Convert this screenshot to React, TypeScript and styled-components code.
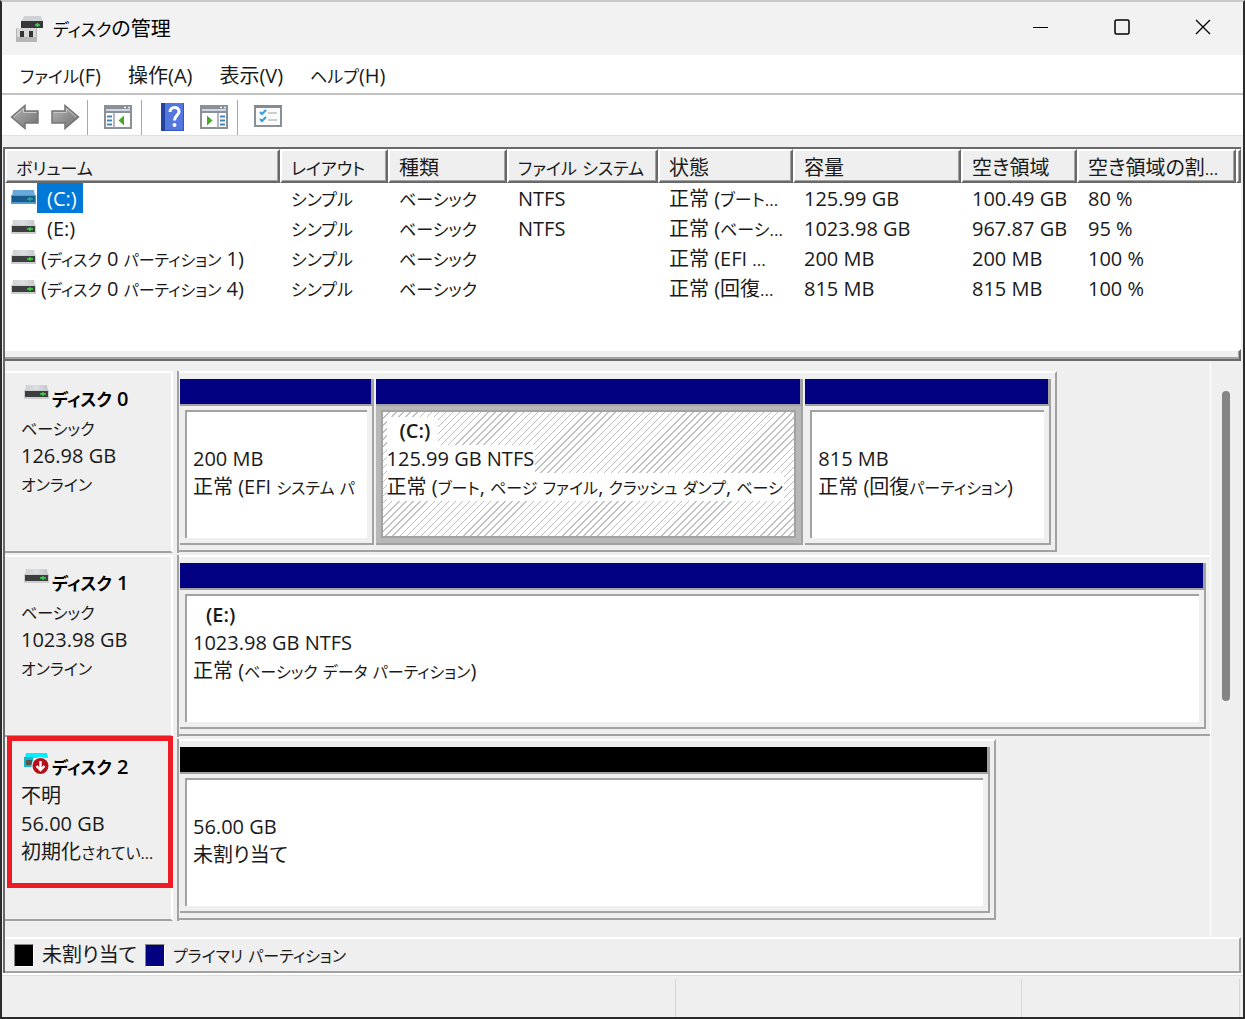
import React from "react";
import styled, { createGlobalStyle, css } from "styled-components";

const GlobalStyle = createGlobalStyle`
  *, *::before, *::after { box-sizing: border-box; }
  html, body { margin: 0; padding: 0; }
  body {
    background: #262626;
    color: #1a1a1a;
    font-family: "Open Sans", "Noto Sans CJK JP", sans-serif;
    font-size: 20px;
    line-height: 28px;
    font-feature-settings: "palt" 1;
  }
  button { font: inherit; font-feature-settings: inherit; color: inherit; border: 0; background: none; padding: 0; }
  svg { flex: none; }
`;

const face = "#efefef";
const shade = "#a2a2a2";
const dark = "#696969";
const navy = "#000080";

const Window = styled.div`
  display: flex;
  flex-direction: column;
  min-height: 100vh;
  border: 2px solid #2b2b2b;
  border-top-color: #c8c8c8;
  background: ${face};
`;

const Kana = styled.span<{ $compact?: boolean }>`
  font-size: ${(p) => (p.$compact ? 16 : 17)}px;
  line-height: 20px;
`;

const TitleBar = styled.header`
  display: flex;
  align-items: center;
  height: 53px;
  padding-left: 14px;
  background: #f2f2f2;
  color: #000;
`;

const Title = styled.h1`
  flex: 1;
  margin: 0 0 0 9px;
  font-size: 20px;
  font-weight: 400;
`;

const CaptionButton = styled.button`
  display: grid;
  place-items: center;
  align-self: flex-start;
  width: 81px;
  height: 50px;
`;

const MenuBar = styled.nav`
  display: flex;
  gap: 27px;
  height: 40px;
  padding: 3px 18px 0;
  background: #fff;
  border-bottom: 2px solid #c2c2c2;
`;

const Toolbar = styled.div`
  display: flex;
  align-items: center;
  height: 41px;
  padding: 4px 0 0 3px;
  background: #fff;
  border-bottom: 1px solid #e0e0e0;
`;

const ToolButton = styled.button<{ $wide?: boolean }>`
  display: grid;
  place-items: center;
  width: ${(p) => (p.$wide ? 42 : 40)}px;
  height: 36px;
  flex: none;
`;

const ToolSeparator = styled.span`
  width: 1px;
  height: 35px;
  margin: 0 9px 0 2px;
  background: #a8a8a8;
`;

const Client = styled.main`
  display: flex;
  flex-direction: column;
  flex: 1;
  margin: 11px 2px 0 1px;
  border: solid ${dark};
  border-width: 2px 0 0 2px;
  outline: 1px solid ${face};
`;

const VolumeList = styled.section`
  height: 200px;
  background: #fff;
  overflow: hidden;
`;

const VolumeTable = styled.table`
  width: 100%;
  table-layout: fixed;
  border-collapse: separate;
  border-spacing: 0;
  white-space: nowrap;
`;

const HeadCell = styled.th`
  height: 34px;
  padding: 3px 0 0 9px;
  overflow: hidden;
  font-weight: 400;
  line-height: 26px;
  text-align: left;
  background: ${face};
  border: 2px solid ${dark};
  border-top-color: #fff;
  border-left-color: #fff;
  box-shadow: inset -1px -1px 0 ${shade};
`;

const Cell = styled.td`
  height: 30px;
  padding: 2px 0 0 11px;
  overflow: hidden;
`;

const NameCell = styled(Cell)`
  padding: 0 0 0 6px;
`;

const NameLine = styled.div`
  display: flex;
  align-items: center;
  height: 30px;
`;

const VolumeName = styled.span<{ $selected?: boolean; $letter?: boolean }>`
  height: 30px;
  margin-left: 1px;
  padding: 2px 6px 0 ${(p) => (p.$letter ? 10 : 4)}px;
  ${(p) =>
    p.$selected &&
    css`
      color: #fff;
      background: #0078d7;
    `}
`;

const Splitter = styled.div`
  height: 12px;
  border: solid ${dark};
  border-width: 0 2px 2px 0;
  border-top: 2px solid #fff;
  box-shadow: inset -1px -2px 0 ${shade};
`;

const DiskPane = styled.section`
  display: flex;
  flex: 1;
`;

const DiskList = styled.div`
  display: flex;
  flex: 1;
  flex-direction: column;
  gap: 2px;
  min-width: 0;
  padding: 10px 0 15px;
`;

const ScrollTrack = styled.div`
  width: 31px;
  padding: 30px 0 0 11px;
  border-left: 1px solid #fff;
`;

const ScrollThumb = styled.div`
  width: 8px;
  height: 310px;
  border-radius: 4px;
  background: #858585;
`;

const DiskRow = styled.article`
  display: flex;
  height: 182px;
`;

const DiskLabel = styled.div`
  position: relative;
  width: 168px;
  padding: 11px 4px 0 16px;
  white-space: nowrap;
  border: solid #fff;
  border-width: 2px 2px 0 0;
  border-bottom: 2px solid ${shade};
`;

const DiskTitle = styled.h2`
  display: flex;
  gap: 3px;
  margin: 0;
  padding: 0 0 0 3px;
  font-size: 20px;
  font-weight: 600;
  line-height: 30px;
  color: #000;
`;

const DiskLine = styled.div`
  height: 28px;
`;

const Highlight = styled.div`
  position: absolute;
  inset: -5px -2px 31px 2px;
  border: 5px solid #ed1c24;
`;

const Track = styled.div`
  flex: 1;
  min-width: 0;
  margin-left: 4px;
  border-left: 2px solid ${shade};
`;

const DiskFrame = styled.div<{ $full?: boolean }>`
  display: flex;
  gap: 2px;
  height: 181px;
  padding: 6px 4px 5px 1px;
  border: 2px solid ${shade};
  border-top-color: #fff;
  border-left: 0;
  border-right-width: ${(p) => (p.$full ? 0 : 2)}px;
`;

const Partition = styled.div`
  display: flex;
  flex-direction: column;
  flex-basis: 0;
  min-width: 0;
  border: solid ${shade};
  border-width: 0 2px 2px 0;
`;

const Stripe = styled.div<{ $free?: boolean }>`
  height: 27px;
  border: solid ${shade};
  border-width: 0 1px 2px 0;
  background: ${(p) => (p.$free ? "#000" : navy)};
`;

const PartitionBody = styled.div<{ $selected?: boolean }>`
  flex: 1;
  min-height: 0;
  padding: 4px 5px 5px;
  background: ${(p) => (p.$selected ? "#b8b8b8" : face)};
`;

const PartitionInner = styled.div<{ $selected?: boolean }>`
  height: 100%;
  padding: 5px ${(p) => (p.$selected ? 4 : 6)}px;
  overflow: hidden;
  white-space: nowrap;
  border: solid ${shade};
  border-width: ${(p) => (p.$selected ? "2px" : "2px 0 0 2px")};
  background: ${(p) =>
    p.$selected
      ? "repeating-linear-gradient(135deg, #fff 0, #fff 4px, #c0c0c0 4px, #c0c0c0 5px)"
      : "#fff"};
`;

const PartitionLine = styled.div<{ $strong?: boolean }>`
  height: 28px;
  font-weight: ${(p) => (p.$strong ? 600 : 400)};
`;

const PartitionText = styled.span<{ $indent?: boolean }>`
  display: inline-block;
  height: 28px;
  padding: 0 ${(p) => (p.$indent ? "8px 0 13px" : "1px 0 0")};
  background: #fff;
`;

const Legend = styled.footer`
  display: flex;
  align-items: center;
  gap: 8px;
  height: 36px;
  padding-left: 9px;
  border: solid #fff;
  border-width: 2px 2px 2px 0;
  border-right-color: ${shade};
  border-bottom-color: ${shade};
`;

const Swatch = styled.span<{ $color: string }>`
  width: 20px;
  height: 23px;
  border: 1px solid #888;
  border-right-color: #fff;
  border-bottom-color: #fff;
  background: ${(p) => p.$color};
`;

const StatusBar = styled.div`
  display: flex;
  height: 44px;
  padding: 4px 3px 0 0;
  border-top: 2px solid #fff;
  box-shadow: inset 0 1px 0 #dcdcdc;
`;

const StatusPart = styled.div<{ $grow: number }>`
  flex: ${(p) => p.$grow} 0 0;
  border-right: 1px solid #d6d6d6;
`;

// Kana runs are set a step smaller than kanji and Latin, as in a UI face with narrow kana.
const kanaRun = /([\u30a0-\u30ff]+|\.{3})/;
const compactRun = /([\u3040-\u30ff]+\.{3}|[\u3040-\u30ff]+|\.{3})/;

function Label({ children, compact }: { children: string; compact?: boolean }) {
  const runs = children.split(compact ? compactRun : kanaRun);
  return (
    <span>
      {runs.map((run, i) => (i % 2 ? <Kana key={i} $compact={compact}>{run}</Kana> : run))}
    </span>
  );
}

function DriveIcon({ selected }: { selected?: boolean }) {
  return (
    <svg width="25" height="18" viewBox="0 0 25 18" aria-hidden="true">
      <defs>
        <linearGradient id="driveLid" x1="0" x2="1" y1="0" y2="0">
          <stop offset="0" stopColor="#cfd2d5" />
          <stop offset="0.5" stopColor="#dcdee0" />
          <stop offset="1" stopColor="#c4c7ca" />
        </linearGradient>
      </defs>
      <path d="M2 1h21l1 6H1z" fill={selected ? "#68a9dc" : "url(#driveLid)"} />
      <path d="M0 6h25v9H0z" fill={selected ? "#4f9ad5" : "#cbcdcf"} />
      <path d="M1 7h23v6H1z" fill={selected ? "#195a8c" : "#3c3e3f"} />
      <path d="M16 10h6M19 8v4" stroke={selected ? "#25b08b" : "#38df3c"} strokeWidth="1.3" />
    </svg>
  );
}

function UnknownDiskIcon() {
  return (
    <svg width="25" height="24" viewBox="0 0 25 24" aria-hidden="true">
      <path d="M2 1h21l1 5H1z" fill="#00f0ff" />
      <path d="M0 5h9v10H0z" fill="#16b6c2" />
      <path d="M2 8h6v5H2z" fill="#555" />
      <circle cx="16.500" cy="14" r="9" fill="#fff" />
      <circle cx="16.500" cy="14" r="8" fill="#b3121c" />
      <path d="M16.500 9v8M12.500 14l4 4 4-4" fill="none" stroke="#fff" strokeWidth="2.4" />
    </svg>
  );
}

function AppIcon() {
  return (
    <svg width="28" height="28" viewBox="0 0 28 28" aria-hidden="true">
      <path d="M8 1h17l2 6H5z" fill="#d0d3d5" />
      <path d="M5 6h22v7H5z" fill="#35383a" />
      <path d="M19 10h5M21.500 8v4" stroke="#36df3c" strokeWidth="1.500" />
      <path d="M0 13h21v14H0z" fill="#b5b5b5" />
      <path d="M1 13h19v9H1z" fill="#d8d8d8" />
      <path d="M4 16h4v6H4zM13 16h4v6h-4z" fill="#343434" />
    </svg>
  );
}

function ArrowIcon({ right }: { right?: boolean }) {
  return (
    <svg width="30" height="26" viewBox="0 0 30 26" aria-hidden="true">
      <defs>
        <linearGradient id="arrowFill" x1="0" x2="1" y1="0" y2="1">
          <stop offset="0" stopColor="#b5b5b5" />
          <stop offset="1" stopColor="#6f6f6f" />
        </linearGradient>
      </defs>
      <path
        d={right ? "M2 7h13V1.500L28.500 13 15 24.500V19H2z" : "M28 7H15V1.500L1.500 13 15 24.500V19h13z"}
        fill="url(#arrowFill)"
        stroke="#767676"
        strokeWidth="1.500"
      />
      <path
        d={right ? "M3.500 8.500h13V4.500l9.500 8.500" : "M26.500 8.500h-13V4.500L4 13"}
        fill="none"
        stroke="#c9c9c9"
        strokeWidth="1"
      />
    </svg>
  );
}

function PaneIcon({ right }: { right?: boolean }) {
  const list = right ? 20 : 3;
  return (
    <svg width="28" height="24" viewBox="0 0 28 24" aria-hidden="true">
      <path d="M1 1h26v22H1z" fill="#fff" stroke="#8b9096" strokeWidth="2" />
      <path d="M1 1h26v7H1z" fill="#8b919a" />
      <path d="M2 5h24" stroke="#d4d9e1" strokeWidth="2" />
      <path d="M20 2.500h2M24 2.500h2" stroke="#e8ecf2" strokeWidth="1.500" />
      <path d={right ? "M18 8v15" : "M10 8v15"} stroke="#9ba0a7" strokeWidth="1.500" />
      <path d={`M${list} 11.500h5M${list} 15.500h5M${list} 19.500h5`} stroke="#4484bd" strokeWidth="1.800" />
      <path d={right ? "M7 10.500v10l5.500-5z" : "M20 10.500v10l-5.500-5z"} fill="#44ad24" />
    </svg>
  );
}

function HelpIcon() {
  return (
    <svg width="23" height="28" viewBox="0 0 23 28" aria-hidden="true">
      <path d="M0 0h23v28H0z" fill="#3156c0" />
      <path d="M4 0h18v27H4z" fill="#5377dc" />
      <path d="M0 0h4v28H0z" fill="#2442a0" />
      <path d="M9 9c0-6 9-6 9-.500 0 4-4.500 4-4.500 9" fill="none" stroke="#fff" strokeWidth="3" />
      <circle cx="13.500" cy="22" r="2" fill="#fff" />
    </svg>
  );
}

function ChecklistIcon() {
  return (
    <svg width="28" height="24" viewBox="0 0 28 24" aria-hidden="true">
      <path d="M1 1h26v20H1z" fill="#fbfbfb" stroke="#8b9096" strokeWidth="2" />
      <path d="M0 0h28v3H0z" fill="#858b92" />
      <path d="M6 7l2 2 4-4M6 14l2 2 4-4" fill="none" stroke="#319ce0" strokeWidth="2" />
      <path d="M14 8h9M14 15h9" stroke="#c0c0c0" strokeWidth="1.500" />
    </svg>
  );
}

const columns = [
  { title: "ボリューム", width: 275 },
  { title: "レイアウト", width: 108 },
  { title: "種類", width: 119 },
  { title: "ファイル システム", width: 151 },
  { title: "状態", width: 135 },
  { title: "容量", width: 168 },
  { title: "空き領域", width: 116 },
  { title: "空き領域の割...", width: 159 },
];

const volumes = [
  ["(C:)", "シンプル", "ベーシック", "NTFS", "正常 (ブート...", "125.99 GB", "100.49 GB", "80 %"],
  ["(E:)", "シンプル", "ベーシック", "NTFS", "正常 (ベーシ...", "1023.98 GB", "967.87 GB", "95 %"],
  ["(ディスク 0 パーティション 1)", "シンプル", "ベーシック", "", "正常 (EFI ...", "200 MB", "200 MB", "100 %"],
  ["(ディスク 0 パーティション 4)", "シンプル", "ベーシック", "", "正常 (回復...", "815 MB", "815 MB", "100 %"],
];

type Part = { size: number; name?: string; capacity: string; status: string; free?: boolean; selected?: boolean };
type Disk = { title: string; lines: string[]; span: number; parts: Part[]; unknown?: boolean };

const disks: Disk[] = [
  {
    title: "ディスク 0",
    lines: ["ベーシック", "126.98 GB", "オンライン"],
    span: 85.2,
    parts: [
      { size: 193, capacity: "200 MB", status: "正常 (EFI システム パ" },
      {
        size: 429,
        name: "(C:)",
        capacity: "125.99 GB NTFS",
        status: "正常 (ブート, ページ ファイル, クラッシュ ダンプ, ベーシ",
        selected: true,
      },
      { size: 246, capacity: "815 MB", status: "正常 (回復パーティション)" },
    ],
  },
  {
    title: "ディスク 1",
    lines: ["ベーシック", "1023.98 GB", "オンライン"],
    span: 100,
    parts: [{ size: 1, name: "(E:)", capacity: "1023.98 GB NTFS", status: "正常 (ベーシック データ パーティション)" }],
  },
  {
    title: "ディスク 2",
    lines: ["不明", "56.00 GB", "初期化されてい..."],
    span: 79.2,
    unknown: true,
    parts: [{ size: 1, capacity: "56.00 GB", status: "未割り当て", free: true }],
  },
];

export default function App() {
  return (
    <>
      <GlobalStyle />
      <Window>
        <TitleBar>
          <AppIcon />
          <Title><Label>ディスクの管理</Label></Title>
          <CaptionButton aria-label="最小化">
            <svg width="16" height="16" viewBox="0 0 16 16">
              <path d="M0 8.500h15" stroke="#000" />
            </svg>
          </CaptionButton>
          <CaptionButton aria-label="最大化">
            <svg width="16" height="16" viewBox="0 0 16 16">
              <rect x="1" y="1" width="14" height="14" rx="1.500" fill="none" stroke="#000" strokeWidth="1.500" />
            </svg>
          </CaptionButton>
          <CaptionButton aria-label="閉じる">
            <svg width="16" height="16" viewBox="0 0 16 16">
              <path d="M1 1l14 14M15 1L1 15" stroke="#000" strokeWidth="1.300" />
            </svg>
          </CaptionButton>
        </TitleBar>
        <MenuBar>
          {["ファイル(F)", "操作(A)", "表示(V)", "ヘルプ(H)"].map((m) => (
            <button key={m}><Label>{m}</Label></button>
          ))}
        </MenuBar>
        <Toolbar>
          <ToolButton aria-label="戻る"><ArrowIcon /></ToolButton>
          <ToolButton aria-label="進む"><ArrowIcon right /></ToolButton>
          <ToolSeparator />
          <ToolButton $wide aria-label="コンソール ツリー"><PaneIcon /></ToolButton>
          <ToolSeparator />
          <ToolButton $wide aria-label="ヘルプ"><HelpIcon /></ToolButton>
          <ToolButton $wide aria-label="操作ウィンドウ"><PaneIcon right /></ToolButton>
          <ToolSeparator />
          <ToolButton $wide aria-label="設定"><ChecklistIcon /></ToolButton>
        </Toolbar>
        <Client>
          <VolumeList>
            <VolumeTable>
              <colgroup>
                {columns.map((c) => (
                  <col key={c.title} width={c.width} />
                ))}
                <col />
              </colgroup>
              <thead>
                <tr>
                  {columns.map((c) => (
                    <HeadCell key={c.title} scope="col"><Label>{c.title}</Label></HeadCell>
                  ))}
                  <HeadCell as="td" />
                </tr>
              </thead>
              <tbody>
                {volumes.map(([name, ...rest], row) => (
                  <tr key={name}>
                    <NameCell>
                      <NameLine>
                        <DriveIcon selected={row === 0} />
                        <VolumeName $selected={row === 0} $letter={row < 2}><Label compact>{name}</Label></VolumeName>
                      </NameLine>
                    </NameCell>
                    {rest.map((value, i) => (
                      <Cell key={i}><Label>{value}</Label></Cell>
                    ))}
                  </tr>
                ))}
              </tbody>
            </VolumeTable>
          </VolumeList>
          <Splitter />
          <DiskPane>
            <DiskList>
              {disks.map((d) => (
                <DiskRow key={d.title}>
                  <DiskLabel>
                    <DiskTitle>
                      {d.unknown ? <UnknownDiskIcon /> : <DriveIcon />}
                      <Label>{d.title}</Label>
                    </DiskTitle>
                    {d.lines.map((l) => (
                      <DiskLine key={l}><Label compact>{l}</Label></DiskLine>
                    ))}
                    {d.unknown && <Highlight />}
                  </DiskLabel>
                  <Track>
                    <DiskFrame $full={d.span === 100} style={{ width: `${d.span}%` }}>
                      {d.parts.map((p) => (
                        <Partition key={p.capacity} style={{ flexGrow: p.size }}>
                          <Stripe $free={p.free} />
                          <PartitionBody $selected={p.selected}>
                            <PartitionInner $selected={p.selected}>
                              <PartitionLine $strong>
                                {p.name && <PartitionText $indent>{p.name}</PartitionText>}
                              </PartitionLine>
                              <PartitionLine><PartitionText>{p.capacity}</PartitionText></PartitionLine>
                              <PartitionLine>
                                <PartitionText><Label compact={!p.free}>{p.status}</Label></PartitionText>
                              </PartitionLine>
                            </PartitionInner>
                          </PartitionBody>
                        </Partition>
                      ))}
                    </DiskFrame>
                  </Track>
                </DiskRow>
              ))}
            </DiskList>
            <ScrollTrack>
              <ScrollThumb />
            </ScrollTrack>
          </DiskPane>
          <Legend>
            <Swatch $color="#000" />
            <Label>未割り当て</Label>
            <Swatch $color={navy} />
            <Label compact>プライマリ パーティション</Label>
          </Legend>
        </Client>
        <StatusBar>
          <StatusPart $grow={675} />
          <StatusPart $grow={345} />
          <StatusPart $grow={218} />
        </StatusBar>
      </Window>
    </>
  );
}
